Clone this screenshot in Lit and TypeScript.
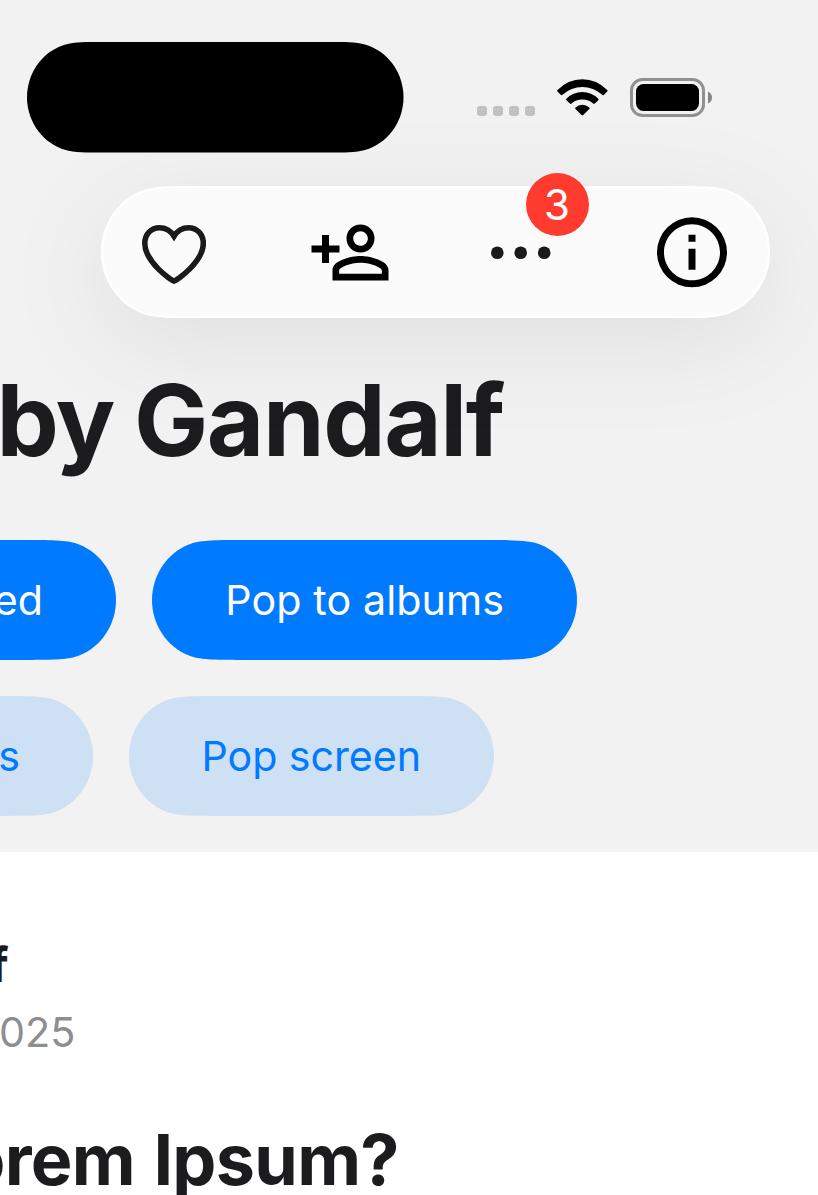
import { LitElement, html, css, svg } from "lit";
import { customElement, property } from "lit/decorators.js";

/** Capsule outline with continuous-curvature ends. `s` is how far the curve runs along the straight edge, in radii. */
function capsule(w: number, h: number, s: number, o = 0): string {
  const r = h / 2 - o;
  const x = (k: number) => o + k * r;
  const X = (k: number) => w - o - k * r;
  const y = (k: number) => o + k * r;
  const Y = (k: number) => h - o - k * r;
  return `M${x(s)} ${y(0)}H${X(s)}
C${X(1)} ${y(0)} ${X(0.79)} ${y(0.005)} ${X(0.615)} ${y(0.073)}C${X(0.24)} ${y(0.222)} ${X(0)} ${y(0.595)} ${X(0)} ${y(1)}
C${X(0)} ${Y(0.595)} ${X(0.24)} ${Y(0.222)} ${X(0.615)} ${Y(0.073)}C${X(0.79)} ${Y(0.005)} ${X(1)} ${Y(0)} ${X(s)} ${Y(0)}
H${x(s)}C${x(1)} ${Y(0)} ${x(0.79)} ${Y(0.005)} ${x(0.615)} ${Y(0.073)}C${x(0.24)} ${Y(0.222)} ${x(0)} ${Y(0.595)} ${x(0)} ${Y(1)}
C${x(0)} ${y(0.595)} ${x(0.24)} ${y(0.222)} ${x(0.615)} ${y(0.073)}C${x(0.79)} ${y(0.005)} ${x(1)} ${y(0)} ${x(s)} ${y(0)}Z`;
}

@customElement("pill-button")
class PillButton extends LitElement {
  @property() label = "";
  @property({ type: Number }) width = 0;
  @property({ type: Boolean, reflect: true }) tinted = false;
  static styles = css`
    :host { display: block; flex: none; color: #fff; --fill: #007aff; }
    :host([tinted]) { color: #007aff; --fill: #cee0f4; }
    .button { position: relative; display: block; height: 120px; padding: 0 73px 0 0; margin: 0; border: 0; background: none;
      color: inherit; font: 400 41.2px/120px Inter, "Liberation Sans", sans-serif; text-align: right; white-space: nowrap; }
    .shape { position: absolute; left: 0; top: 0; fill: var(--fill); }
    .text { position: relative; letter-spacing: var(--track, 0); }
  `;
  render() {
    return html`<button class="button" style="width:${this.width}px">
      <svg class="shape" width=${this.width} height="120"><path d=${capsule(this.width, 120, 1.5)} /></svg><span class="text">${this.label}</span></button>`;
  }
}

@customElement("app-root")
class AppRoot extends LitElement {
  static styles = css`
    :host { display: block; width: 818px; height: 1195px; overflow: hidden; background: #fff; color: #1c1c1e;
      font-family: Inter, "Liberation Sans", sans-serif; }
    svg { display: block; flex: none; }
    .header { box-sizing: border-box; height: 852px; background: #f2f2f2; overflow: hidden; }
    .status { display: flex; height: 186px; align-items: flex-start; }
    .island { margin: 41.5px 0 0 26.5px; }
    .signal { display: flex; gap: 6px; margin: 106px 0 0 73.5px; }
    .signal i { width: 10px; height: 10px; border-radius: 3px; background: #c1c1c1; }
    .wifi { margin: 79px 0 0 21.5px; }
    .battery { margin: 78px 0 0 22px; }
    .toolbar { position: relative; display: flex; align-items: center; width: 669px; height: 132px; margin-left: 101px; }
    .glass { position: absolute; left: 0; top: 0; overflow: visible; filter: drop-shadow(0 24px 48px rgba(0, 0, 0, 0.075)); }
    .icon { position: relative; }
    .heart { margin-left: 41px; }
    .add { margin-left: 102px; }
    .more { position: relative; margin-left: 98px; }
    .info { margin-left: 98.5px; }
    .badge { position: absolute; left: 35.5px; top: -71.7px; width: 63px; height: 63px; border-radius: 50%; background: #ff3b30;
      color: #fff; font-size: 42px; line-height: 63px; text-align: center; }
    .title { margin: 42px 0 60px -3.5px; font-size: 99px; line-height: 120px; font-weight: 700; letter-spacing: -1.4px; word-spacing: -2px; white-space: nowrap; }
    .row { display: flex; gap: 36px; height: 120px; margin-bottom: 36px; }
    .first { margin-left: -134px; }
    .second { margin-left: -157px; }
    .wide { --track: 0.1px; }
    .wide[tinted] { --track: -0.05px; }
    .article { padding-top: 82.5px; white-space: nowrap; }
    .author { margin-left: -10.5px; font-size: 48px; line-height: 60px; font-weight: 650; }
    .date { margin: 7.5px 0 0 -1px; font-size: 41.4px; line-height: 60px; color: #8e8e8e; }
    .question { margin: 52.5px 0 0 -37.5px; font-size: 70px; line-height: 90px; font-weight: 700; letter-spacing: -0.7px; word-spacing: 2.5px; }
  `;
  render() {
    return html`
      <section class="header">
        <div class="status">
          <svg class="island" width="377" height="111"><path d=${capsule(376.5, 110.5, 1.25)} /></svg>
          <div class="signal"><i></i><i></i><i></i><i></i></div>
          <svg class="wifi" width="51" height="38" viewBox="557 79 51 38">
            <path d="M557.5 90Q568 79.2 582.3 79.2T607.2 90Q608 90.8 607.2 91.6L603.8 95Q603 95.6 602.2 94.8Q593.5 87 582.3 87T562.5 94.8Q561.7 95.6 560.9 95L557.5 91.6Q556.7 90.8 557.5 90Z" />
            <path d="M566.4 98.7Q573 92 582.3 92T598.3 98.7Q599 99.5 598.3 100.3L594.8 103.6Q594 104.3 593.2 103.6Q588.8 99.5 582.3 99.5T571.5 103.6Q570.7 104.3 569.9 103.6L566.4 100.3Q565.7 99.5 566.4 98.7Z" />
            <path d="M575.5 107.4Q578.4 104.8 582.3 104.8T589.3 107.4Q590.1 108.2 589.3 109L583.2 115.1Q582.3 116 581.5 115.1L575.5 109Q574.7 108.2 575.5 107.4Z" />
          </svg>
          <svg class="battery" width="83" height="39">
            <rect x="1.5" y="1.5" width="72" height="36" rx="11" fill="none" stroke="#919191" stroke-width="3" />
            <rect x="6" y="6" width="63" height="27" rx="7.5" />
            <path d="M78 13.5Q82 15.5 82 19.5T78 25.5Z" fill="#858585" />
          </svg>
        </div>
        <nav class="toolbar">
          <svg class="glass" width="669" height="132">
            <path d=${capsule(669, 132, 1.5)} fill="#fbfbfb" />
            <path d=${capsule(669, 132, 1.5, 1)} fill="none" stroke="#fff" stroke-width="2" />
          </svg>
          <svg class="icon heart" width="64" height="64" viewBox="142 220 64 64">
            <path d="M174 281C171 280.2 144.8 262 144.8 243.2C144.8 234.2 151 227.7 159.5 227.7C166 227.7 171 231.3 174 236.2C177 231.3 182 227.7 188.5 227.7C197 227.7 203.3 234.2 203.3 243.2C203.3 262 177 280.2 174 281Z" fill="none" stroke="#1a1a1a" stroke-width="5.6" stroke-linejoin="miter" />
          </svg>
          <svg class="icon add" width="84" height="84" viewBox="0 -0.14 24 24">
            <path d="M15,4A4,4 0 0,0 11,8A4,4 0 0,0 15,12A4,4 0 0,0 19,8A4,4 0 0,0 15,4M15,5.9C16.16,5.9 17.1,6.84 17.1,8C17.1,9.16 16.16,10.1 15,10.1A2.1,2.1 0 0,1 12.9,8A2.1,2.1 0 0,1 15,5.9M4,7V10H1V12H4V15H6V12H9V10H6V7H4M15,13C12.33,13 7,14.33 7,17V20H23V17C23,14.33 17.67,13 15,13M15,14.9C17.97,14.9 21.1,16.36 21.1,17V18.1H8.9V17C8.9,16.36 12,14.9 15,14.9Z" />
          </svg>
          <div class="more">
            <svg width="61" height="14" viewBox="490 245 61 14" fill="#1a1a1a">
              ${[497.3, 520.7, 544.2].map((x) => svg`<circle cx=${x} cy="252.7" r="6.3" />`)}
            </svg>
            <span class="badge">3</span>
          </div>
          <svg class="icon info" width="84" height="84" viewBox="0 -0.1 24 24">
            <path d="M11,9H13V7H11M12,20C7.59,20 4,16.41 4,12C4,7.59 7.59,4 12,4C16.41,4 20,7.59 20,12C20,16.41 16.41,20 12,20M12,2A10,10 0 0,0 2,12A10,10 0 0,0 12,22A10,10 0 0,0 22,12A10,10 0 0,0 12,2M11,17H13V11H11V17Z" />
          </svg>
        </nav>
        <div class="title">by Gandalf</div>
        <div class="row">
          <pill-button class="first" width="250" label="ed"></pill-button>
          <pill-button class="wide" width="425" label="Pop to albums"></pill-button>
        </div>
        <div class="row">
          <pill-button class="second" tinted width="250" label="s"></pill-button>
          <pill-button class="wide" tinted width="365" label="Pop screen"></pill-button>
        </div>
      </section>
      <section class="article">
        <div class="author">f</div>
        <div class="date">025</div>
        <div class="question">orem Ipsum?</div>
      </section>`;
  }
}
